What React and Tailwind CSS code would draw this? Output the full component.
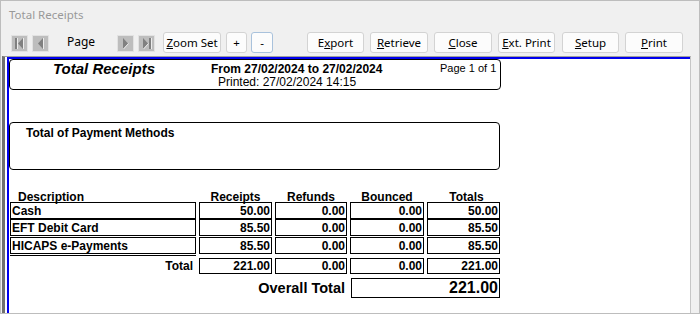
const ui = { fontFamily: '"Noto Sans", "Open Sans", sans-serif' };
const rep = { fontFamily: '"Liberation Sans", Arial, sans-serif' };

function NavBtn({ dir, bar }) {
  return (
    <div className="w-[17px] h-[17px] border border-[#e2e2e2] bg-[#bdbdbd] flex items-center justify-center">
      <svg width="15" height="15" viewBox="0 0 15 15">
        {dir === "left" ? (
          <g>
            {bar && <rect x="3" y="2" width="2" height="11" fill="#808080" />}
            {bar && <rect x="5" y="2" width="1" height="11" fill="#ececec" />}
            <polygon points={bar ? "11,2 6,7.5 11,13" : "10,2 5,7.5 10,13"} fill="#808080" />
            <line x1={bar ? 11.5 : 10.5} y1="2" x2={bar ? 11.5 : 10.5} y2="13" stroke="#ececec" strokeWidth="1" />
          </g>
        ) : (
          <g>
            <polygon points={bar ? "4,2 9,7.5 4,13" : "5,2 10,7.5 5,13"} fill="#808080" />
            <line x1={bar ? 4.5 : 5.5} y1="13" x2={bar ? 9.5 : 10.5} y2="7.5" stroke="#ececec" strokeWidth="1" />
            {bar && <rect x="10" y="2" width="2" height="11" fill="#808080" />}
            {bar && <rect x="12" y="2" width="1" height="11" fill="#ececec" />}
          </g>
        )}
      </svg>
    </div>
  );
}

function Btn({ children, className = "", focus }) {
  return (
    <div
      className={`h-[21px] flex items-center justify-center rounded-[3px] border bg-[#fcfcfc] text-[11.5px] text-black ${
        focus ? "border-[#a9c2dc]" : "border-[#d3d3d3]"
      } ${className}`}
    >
      {children}
    </div>
  );
}

function Cell({ w, children, left, className = "" }) {
  return (
    <div
      className={`${w} h-full border border-black flex items-center text-[12px] font-bold leading-none ${
        left ? "justify-start pl-[1px]" : "justify-end pr-[1px]"
      } ${className}`}
    >
      {children}
    </div>
  );
}

function Row({ desc, vals, className = "" }) {
  return (
    <div className={`flex gap-[3px] h-[17px] ${className}`}>
      <Cell w="w-[186px]" left>{desc}</Cell>
      <Cell w="w-[73px]">{vals[0]}</Cell>
      <Cell w="w-[72px]">{vals[1]}</Cell>
      <Cell w="w-[74px]">{vals[2]}</Cell>
      <Cell w="w-[73px]">{vals[3]}</Cell>
    </div>
  );
}

export default function App() {
  return (
    <div className="w-[700px] h-[314px] border border-[#bdbdbd] bg-[#f0f0f0] flex flex-col overflow-hidden" style={ui}>
      <div className="h-[27px] pl-[8px] flex items-center text-[11.5px] text-[#999999]">Total Receipts</div>

      <div className="h-[28px] flex items-start pt-[4px]">
        <div className="ml-[10px] mt-[3px]"><NavBtn dir="left" bar /></div>
        <div className="ml-[4px] mt-[3px]"><NavBtn dir="left" /></div>
        <div className="ml-[18px] mt-[1px] w-[50px] text-[12px] text-black">Page</div>
        <div className="mt-[3px]"><NavBtn dir="right" /></div>
        <div className="ml-[4px] mt-[3px]"><NavBtn dir="right" bar /></div>
        <Btn className="ml-[8px] w-[58px]"><span><u>Z</u>oom Set</span></Btn>
        <Btn className="ml-[5px] w-[21px]">+</Btn>
        <Btn className="ml-[4px] w-[22px]" focus>-</Btn>
        <Btn className="ml-[34px] w-[57px]"><span>E<u>x</u>port</span></Btn>
        <Btn className="ml-[6px] w-[58px]"><span><u>R</u>etrieve</span></Btn>
        <Btn className="ml-[6px] w-[58px]"><span><u>C</u>lose</span></Btn>
        <Btn className="ml-[6px] w-[57px]"><span><u>E</u>xt. Print</span></Btn>
        <Btn className="ml-[7px] w-[57px]"><span><u>S</u>etup</span></Btn>
        <Btn className="ml-[6px] w-[58px]"><span><u>P</u>rint</span></Btn>
      </div>

      <div className="flex-1 ml-[1px] mr-[8px] border-l-[3px] border-l-[#707070] border-t border-t-[#a0a0a0] border-r border-r-[#c6c6c6] bg-white pl-[2px] flex">
        <div className="flex-1 border-l-2 border-t-2 border-[#0000ee] text-black" style={rep}>
          <div className="w-[492px] h-[31px] border border-black rounded-[4px] flex flex-col">
            <div className="flex h-[17px] items-center">
              <div className="w-[201px] pl-[43px] text-[15px] font-bold italic leading-none">Total Receipts</div>
              <div className="w-[229px] text-[12px] font-bold leading-none">From 27/02/2024 to 27/02/2024</div>
              <div className="text-[11px] leading-none">Page 1 of 1</div>
            </div>
            <div className="pl-[208px] text-[12px] leading-none -mt-[1px]">Printed: 27/02/2024 14:15</div>
          </div>

          <div className="mt-[32px] w-[491px] h-[48px] border border-black rounded-[4px] pl-[16px] pt-[4px] text-[12px] font-bold leading-none">
            Total of Payment Methods
          </div>

          <div className="ml-[1px]">
            <div className="mt-[21px] flex gap-[3px] h-[12px] text-[12px] font-bold leading-[12px]">
              <div className="w-[186px] pl-[8px]">Description</div>
              <div className="w-[73px] text-center">Receipts</div>
              <div className="w-[72px] text-center">Refunds</div>
              <div className="w-[74px] text-center">Bounced</div>
              <div className="w-[73px] text-center pl-[6px]">Totals</div>
            </div>
            <Row desc="Cash" vals={["50.00", "0.00", "0.00", "50.00"]} className="-mt-[1px]" />
            <Row desc="EFT Debit Card" vals={["85.50", "0.00", "0.00", "85.50"]} />
            <Row desc="HICAPS e-Payments" vals={["85.50", "0.00", "0.00", "85.50"]} className="mt-[1px]" />
            <div className="mt-[1px] w-[186px] h-[2px] border-t border-black" />
            <div className="mt-[1px] flex gap-[3px] h-[16px]">
              <div className="w-[186px] text-right pr-[3px] text-[12px] font-bold leading-[16px]">Total</div>
              <Cell w="w-[73px]">221.00</Cell>
              <Cell w="w-[72px]">0.00</Cell>
              <Cell w="w-[74px]">0.00</Cell>
              <Cell w="w-[73px]">221.00</Cell>
            </div>
            <div className="mt-[4px] flex h-[20px]">
              <div className="w-[340px] text-right pr-[5px] text-[14.5px] font-bold leading-[20px]">Overall Total</div>
              <div className="ml-[1px] w-[149px] h-full border border-black flex items-center justify-end pr-[1px] text-[16px] font-bold leading-none">
                221.00
              </div>
            </div>
          </div>
        </div>
      </div>
    </div>
  );
}
